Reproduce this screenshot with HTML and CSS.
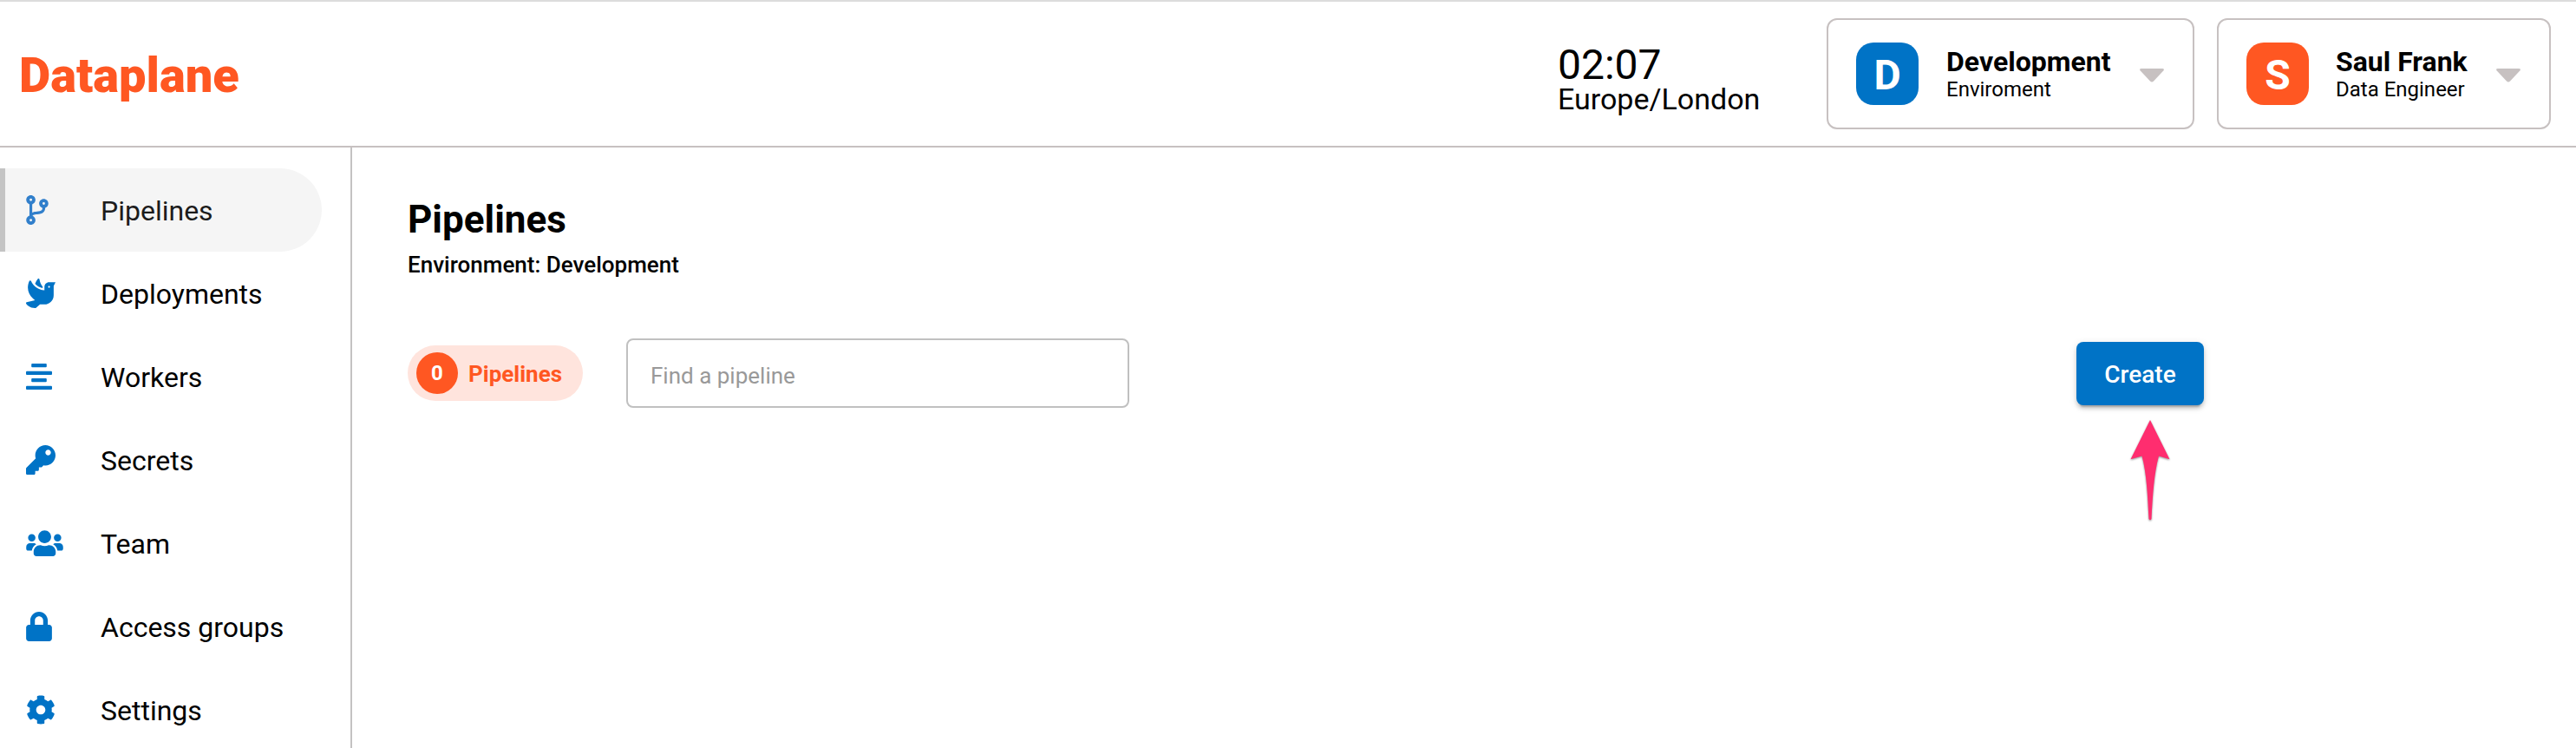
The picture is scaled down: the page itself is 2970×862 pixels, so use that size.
FILE: index.html
```html
<!DOCTYPE html>
<html lang="en">
<head>
<meta charset="utf-8">
<title>Dataplane - Pipelines</title>
<link rel="stylesheet" href="styles.css">
</head>
<body>
<header class="topbar">
  <div class="logo">Dataplane</div>
  <div class="clock"><div class="clock-time">02:07</div><div class="clock-zone">Europe/London</div></div>
  <div class="picker picker-env">
    <div class="avatar avatar-blue">D</div>
    <div class="picker-text"><div class="picker-name">Development</div><div class="picker-sub">Enviroment</div></div>
    <svg class="caret" viewBox="0 0 28 16"><path d="M2 0H26Q29 0 27.3 2.4L16 14.5Q14 16.6 12 14.5L.7 2.4Q-1 0 2 0z"/></svg>
  </div>
  <div class="picker picker-user">
    <div class="avatar avatar-orange">S</div>
    <div class="picker-text"><div class="picker-name">Saul Frank</div><div class="picker-sub">Data Engineer</div></div>
    <svg class="caret" viewBox="0 0 28 16"><path d="M2 0H26Q29 0 27.3 2.4L16 14.5Q14 16.6 12 14.5L.7 2.4Q-1 0 2 0z"/></svg>
  </div>
</header>
<div class="body">
  <nav class="sidebar">
    <a class="item active"><span class="item-icon"><svg width="26" height="34" viewBox="0 0 384 512"><path fill-rule="evenodd" d="M384 144c0-44.200-35.800-80-80-80s-80 35.800-80 80c0 36.400 24.300 67.100 57.500 76.800-.6 16.100-4.200 28.500-11 36.900-15.400 19.200-49.300 22.400-85.200 25.700-28.200 2.600-57.400 5.400-81.300 16.900v-144c32.500-10.200 56-40.500 56-76.300 0-44.200-35.800-80-80-80S0 35.800 0 80c0 35.800 23.500 66.100 56 76.300v199.300C23.500 365.900 0 396.200 0 432c0 44.200 35.800 80 80 80s80-35.800 80-80c0-34-21.200-63.100-51.200-74.600 3.100-5.200 7.800-9.800 14.900-13.400 16.200-8.200 40.400-10.400 66.100-12.800 42.200-3.900 90-8.400 118.200-43.400 14-17.400 21.100-39.800 21.600-67.900 31.600-10.800 54.400-40.700 54.400-75.900zM80 58a22 22 0 1 1 0 44a22 22 0 1 1 0-44zM80 410a22 22 0 1 1 0 44a22 22 0 1 1 0-44zM304 122a22 22 0 1 1 0 44a22 22 0 1 1 0-44z"/></svg></span><span class="item-label">Pipelines</span></a>
    <a class="item"><span class="item-icon"><svg width="34" height="34" viewBox="0 0 512 512"><path d="M288 167.200v-28.100c-28.200-36.300-47.100-79.300-54.100-125.200-2.100-13.500-19-18.800-27.800-8.300-21.100 24.900-37.700 54.100-48.900 86.500 34.200 38.300 80 64.600 130.800 75.100zM400 64c-44.200 0-80 35.900-80 80.100v59.400C215.600 197.300 127 133 87 41.800c-5.500-12.500-23.200-13.200-29-.9C41.400 76 32 115.200 32 156.600c0 70.800 34.100 136.900 85.100 185.900 13.200 12.700 26.100 23.200 38.900 32.800l-143.900 36C1.400 414-3.400 426.400 2.600 435.700 20 462.600 63 508.200 155.800 512c8 .3 16-2.600 22.100-7.900l65.200-56.100H320c88.400 0 160-71.500 160-159.900V128l32-64H400zm0 96.100c-8.800 0-16-7.200-16-16s7.200-16 16-16 16 7.200 16 16-7.200 16-16 16z"/></svg></span><span class="item-label">Deployments</span></a>
    <a class="item"><span class="item-icon"><svg width="30" height="30" viewBox="0 0 30 30"><rect x="6.200" y="0" width="17.600" height="4.200" rx="1"/><rect x="0" y="8.700" width="30" height="4.200" rx="1"/><rect x="6.200" y="17" width="17.600" height="4.200" rx="1"/><rect x="0" y="25.700" width="30" height="4.200" rx="1"/></svg></span><span class="item-label">Workers</span></a>
    <a class="item"><span class="item-icon"><svg width="34" height="34" viewBox="0 0 512 512"><path d="M512 176.001C512 273.203 433.202 352 336 352c-11.220 0-22.190-1.062-32.827-3.069l-24.012 27.014A23.999 23.999 0 0 1 261.223 384H224v40c0 13.255-10.745 24-24 24h-40v40c0 13.255-10.745 24-24 24H24c-13.255 0-24-10.745-24-24v-78.059c0-6.365 2.529-12.470 7.029-16.971l161.802-161.802C163.108 213.814 160 195.271 160 176 160 78.798 238.797.001 335.999 0 433.488-.001 512 78.511 512 176.001zM336 128c0 26.510 21.490 48 48 48s48-21.490 48-48-21.490-48-48-48-48 21.490-48 48z"/></svg></span><span class="item-label">Secrets</span></a>
    <a class="item"><span class="item-icon"><svg width="43" height="34" viewBox="0 0 640 512"><path d="M96 224c35.300 0 64-28.700 64-64s-28.700-64-64-64-64 28.700-64 64 28.700 64 64 64zm448 0c35.300 0 64-28.700 64-64s-28.700-64-64-64-64 28.700-64 64 28.700 64 64 64zm32 32h-64c-17.600 0-33.500 7.100-45.100 18.600 40.300 22.100 68.900 62 75.100 109.400h66c17.700 0 32-14.300 32-32v-32c0-35.300-28.700-64-64-64zm-256 0c61.900 0 112-50.100 112-112S381.900 32 320 32 208 82.100 208 144s50.100 112 112 112zm76.800 32h-8.300c-20.800 10-43.900 16-68.500 16s-47.600-6-68.500-16h-8.300C179.600 288 128 339.600 128 403.200V432c0 26.500 21.500 48 48 48h288c26.500 0 48-21.500 48-48v-28.800c0-63.600-51.600-115.200-115.200-115.200zm-223.700-13.400C161.500 263.100 145.600 256 128 256H64c-35.300 0-64 28.700-64 64v32c0 17.700 14.300 32 32 32h65.900c6.300-47.400 34.900-87.300 75.200-109.400z"/></svg></span><span class="item-label">Team</span></a>
    <a class="item"><span class="item-icon"><svg width="30" height="34" viewBox="0 0 448 512"><path d="M400 224h-24v-72C376 68.200 307.800 0 224 0S72 68.200 72 152v72H48c-26.500 0-48 21.500-48 48v192c0 26.500 21.500 48 48 48h352c26.500 0 48-21.500 48-48V272c0-26.500-21.500-48-48-48zm-104 0H152v-72c0-39.700 32.300-72 72-72s72 32.300 72 72v72z"/></svg></span><span class="item-label">Access groups</span></a>
    <a class="item"><span class="item-icon"><svg width="34" height="34" viewBox="0 0 512 512"><path d="M487.400 315.700l-42.600-24.600c4.300-23.200 4.300-47 0-70.200l42.600-24.600c4.900-2.800 7.100-8.600 5.500-14-11.100-35.600-30-67.800-54.700-94.600-3.800-4.100-10-5.100-14.800-2.300L380.800 110c-17.900-15.400-38.500-27.300-60.800-35.100V25.800c0-5.600-3.900-10.500-9.400-11.700-36.700-8.200-74.300-7.800-109.200 0-5.500 1.200-9.400 6.100-9.400 11.700V75c-22.200 7.900-42.800 19.800-60.800 35.100L88.700 85.500c-4.900-2.800-11-1.900-14.800 2.300-24.700 26.700-43.600 58.900-54.700 94.600-1.700 5.400.6 11.200 5.500 14L67.300 221c-4.300 23.200-4.300 47 0 70.200l-42.600 24.600c-4.900 2.800-7.100 8.600-5.500 14 11.100 35.600 30 67.800 54.700 94.600 3.800 4.100 10 5.100 14.800 2.300l42.600-24.600c17.900 15.400 38.500 27.300 60.800 35.100v49.200c0 5.600 3.900 10.500 9.400 11.700 36.700 8.200 74.300 7.800 109.200 0 5.500-1.200 9.400-6.100 9.400-11.700v-49.200c22.200-7.900 42.800-19.800 60.800-35.100l42.600 24.600c4.900 2.800 11 1.900 14.800-2.300 24.700-26.700 43.600-58.900 54.700-94.600 1.500-5.500-.7-11.300-5.600-14.100zM256 336c-44.100 0-80-35.900-80-80s35.900-80 80-80 80 35.900 80 80-35.900 80-80 80z"/></svg></span><span class="item-label">Settings</span></a>
  </nav>
  <main class="main">
    <h1 class="title">Pipelines</h1>
    <div class="subtitle">Environment: Development</div>
    <div class="toolbar">
      <div class="badge"><span class="badge-count">0</span><span class="badge-label">Pipelines</span></div>
      <input class="search" type="text" placeholder="Find a pipeline">
      <div class="create-wrap">
        <button class="create">Create</button>
        <svg class="arrow" width="56" height="126" viewBox="0 0 56 126"><path d="M28 6L50.500 51.300L38 47.500C32.500 68 31 92 29.500 120Q28 122.500 26.500 120C25 92 24 68 18.500 47.500L5.500 51.300z"/></svg>
      </div>
    </div>
  </main>
</div>
</body>
</html>
```
FILE: styles.css
```css
* { box-sizing: border-box; }
body {
  margin: 0;
  height: 862px;
  overflow: hidden;
  background: #fff;
  color: #000;
  font-family: Roboto, "Liberation Sans", sans-serif;
  display: flex;
  flex-direction: column;
}
.topbar {
  flex: none;
  height: 170px;
  border-top: 2px solid #dcdcdc;
  border-bottom: 2px solid #c7c1c1;
  padding: 0 29px 0 22px;
  display: flex;
  align-items: center;
}
.logo {
  color: #ff5722;
  font-size: 56px;
  line-height: 64px;
  font-weight: 900;
  margin-right: auto;
  padding-top: 4px;
}
.clock { width: 310px; padding-top: 13px; }
.clock-time { font-size: 48px; line-height: 44px; }
.clock-zone { font-size: 34px; line-height: 34px; }
.picker {
  height: 128px;
  border: 2px solid #c7c1c1;
  border-radius: 12px;
  padding: 0 33px 0 32px;
  display: flex;
  align-items: center;
}
.picker-env { width: 424px; }
.picker-user { width: 385px; margin-left: 26px; }
.avatar {
  flex: none;
  width: 72px;
  height: 72px;
  border-radius: 20px;
  color: #fff;
  font-size: 48px;
  line-height: 75px;
  font-weight: 700;
  text-align: center;
}
.avatar-blue { background: #0073c6; }
.avatar-orange { background: #ff5722; }
.picker-text { margin-left: 31px; white-space: nowrap; }
.picker-env .picker-text { margin-left: 32px; }
.picker-name { font-size: 32px; line-height: 36px; font-weight: 700; }
.picker-sub { font-size: 24px; line-height: 29px; }
.caret { width: 28px; height: 16px; margin: 4px 0 0 auto; fill: #c7c1c1; }
.body { flex: 1; display: flex; min-height: 0; }
.sidebar {
  flex: none;
  width: 406px;
  padding-top: 24px;
  border-right: 2px solid #c4c2c2;
}
.item {
  height: 96px;
  width: 371px;
  padding-left: 30px;
  display: flex;
  align-items: center;
  font-size: 32px;
}
.item.active {
  padding-left: 24px;
  border-left: 6px solid #c4c4c4;
  border-radius: 0 48px 48px 0;
  background: #f5f5f5;
  color: #1c1c1c;
}
.item-icon { width: 86px; display: flex; fill: #0073c6; }
.item.active .item-icon { fill: #317fcb; }
.item-label { padding-top: 2px; }
.main { flex: 1; padding: 57px 0 0 64px; }
.title { margin: 0; font-size: 44px; line-height: 52px; font-weight: 700; }
.subtitle { font-size: 26px; line-height: 30px; font-weight: 500; padding-top: 11px; }
.toolbar { display: flex; align-items: center; margin-top: 70px; }
.badge {
  width: 202px;
  height: 64px;
  border-radius: 32px;
  background: #ffe4dd;
  padding-left: 10px;
  display: flex;
  align-items: center;
}
.badge-count {
  width: 48px;
  height: 48px;
  border-radius: 50%;
  background: #ff5722;
  color: #fff;
  font-size: 24px;
  line-height: 49px;
  font-weight: 700;
  text-align: center;
}
.badge-label { color: #ff5722; font-size: 26px; font-weight: 700; margin-left: 12px; padding-top: 2px; }
.search {
  width: 580px;
  height: 80px;
  margin-left: 50px;
  border: 2px solid #c0c0c0;
  border-radius: 8px;
  background: #fff;
  padding: 6px 26px 0;
  font: 26px Roboto, sans-serif;
}
.search::placeholder { color: #999; opacity: 1; }
.create-wrap { position: relative; margin-left: 1092px; }
.create {
  display: block;
  width: 147px;
  height: 73px;
  border: 0;
  border-radius: 8px;
  background: #0073c6;
  color: #fff;
  padding: 2px 0 0;
  font: 500 28px Roboto, sans-serif;
  box-shadow: 0 6px 2px -4px rgba(0,0,0,.2), 0 4px 4px rgba(0,0,0,.14), 0 2px 10px rgba(0,0,0,.12);
}
.arrow {
  position: absolute;
  left: 57px;
  top: 84px;
  fill: #ff2d6f;
  filter: drop-shadow(0 1px 1px rgba(0,0,0,.45));
}
```
